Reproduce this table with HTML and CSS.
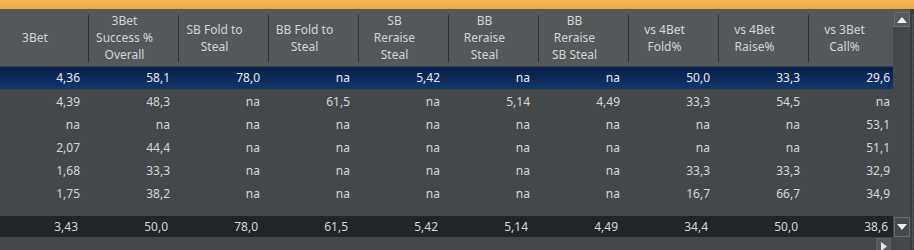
FILE: index.html
```html
<!DOCTYPE html>
<html>
<head>
<meta charset="utf-8">
<link rel="stylesheet" href="styles.css">
</head>
<body>
<div class="app">
  <div class="topbar"></div>
  <div class="main">
    <div class="grid-area">
      <div class="grid-clip">
        <table class="grid">
          <colgroup>
            <col class="c-first"><col class="c"><col class="c"><col class="c"><col class="c"><col class="c"><col class="c"><col class="c"><col class="c"><col class="c">
          </colgroup>
          <thead>
            <tr>
              <th><span>3Bet</span></th>
              <th><span>3Bet<br>Success %<br>Overall</span></th>
              <th><span>SB Fold to<br>Steal</span></th>
              <th><span>BB Fold to<br>Steal</span></th>
              <th><span>SB<br>Reraise<br>Steal</span></th>
              <th><span>BB<br>Reraise<br>Steal</span></th>
              <th><span>BB<br>Reraise<br>SB Steal</span></th>
              <th><span>vs 4Bet<br>Fold%</span></th>
              <th><span>vs 4Bet<br>Raise%</span></th>
              <th><span>vs 3Bet<br>Call%</span></th>
            </tr>
          </thead>
          <tbody>
            <tr class="selected"><td>4,36</td><td>58,1</td><td>78,0</td><td>na</td><td>5,42</td><td>na</td><td>na</td><td>50,0</td><td>33,3</td><td>29,6</td></tr>
            <tr><td>4,39</td><td>48,3</td><td>na</td><td>61,5</td><td>na</td><td>5,14</td><td>4,49</td><td>33,3</td><td>54,5</td><td>na</td></tr>
            <tr><td>na</td><td>na</td><td>na</td><td>na</td><td>na</td><td>na</td><td>na</td><td>na</td><td>na</td><td>53,1</td></tr>
            <tr><td>2,07</td><td>44,4</td><td>na</td><td>na</td><td>na</td><td>na</td><td>na</td><td>na</td><td>na</td><td>51,1</td></tr>
            <tr><td>1,68</td><td>33,3</td><td>na</td><td>na</td><td>na</td><td>na</td><td>na</td><td>33,3</td><td>33,3</td><td>32,9</td></tr>
            <tr><td>1,75</td><td>38,2</td><td>na</td><td>na</td><td>na</td><td>na</td><td>na</td><td>16,7</td><td>66,7</td><td>34,9</td></tr>
            <tr class="spacer"><td colspan="10"></td></tr>
            <tr class="total"><td>3,43</td><td>50,0</td><td>78,0</td><td>61,5</td><td>5,42</td><td>5,14</td><td>4,49</td><td>34,4</td><td>50,0</td><td>38,6</td></tr>
          </tbody>
        </table>
      </div>
      <div class="hscroll">
        <div class="sbtn sbtn-right">
          <svg width="6" height="9" viewBox="0 0 6 9"><path d="M0 0 L6 4.5 L0 9 Z" fill="#e6e6e6"/></svg>
        </div>
      </div>
    </div>
    <div class="vscroll">
      <div class="vs-top">
        <div class="sbtn sbtn-up">
          <svg width="10" height="6" viewBox="0 0 10 6"><path d="M0 6 L5 0 L10 6 Z" fill="#f0f0f0"/></svg>
        </div>
      </div>
      <div class="vs-track"></div>
      <div class="sbtn sbtn-down">
        <svg width="10" height="6" viewBox="0 0 10 6"><path d="M0 0 L10 0 L5 6 Z" fill="#f0f0f0"/></svg>
      </div>
      <div class="vs-bottom"></div>
    </div>
    <div class="edge"></div>
  </div>
</div>
</body>
</html>
```

FILE: styles.css
```css
html, body {
  margin: 0;
  padding: 0;
  background: #45484b;
}
.app {
  width: 914px;
  height: 250px;
  overflow: hidden;
  display: flex;
  flex-direction: column;
  font-family: "Noto Sans", "Open Sans", sans-serif;
  font-size: 12px;
}
.topbar {
  height: 9px;
  flex: none;
  background: linear-gradient(#f6b656, #f0aa45);
}
.main {
  flex: 1;
  display: flex;
  min-height: 0;
}
.grid-area {
  width: 893px;
  flex: none;
  display: flex;
  flex-direction: column;
  background: #45484b;
  overflow: hidden;
}
.grid-clip {
  width: 893px;
  flex: none;
  overflow: hidden;
}
.grid {
  border-collapse: collapse;
  table-layout: fixed;
  width: 899px;
}
.c-first { width: 89px; }
.c { width: 90px; }
.grid th {
  height: 57px;
  padding: 0 19px 0 0;
  background: #55585b;
  color: #d2d4d6;
  font-weight: normal;
  text-align: center;
  line-height: 16.7px;
  position: relative;
  border-bottom: 1px solid #3d4043;
  vertical-align: middle;
}
.grid th span {
  position: relative;
  top: 1px;
}
.grid th::after {
  content: "";
  position: absolute;
  right: 0;
  top: 6px;
  bottom: 4px;
  width: 1px;
  background: #2f3235;
}
.grid td {
  height: 23px;
  padding: 0 9px 0 0;
  text-align: right;
  color: #d6d7d8;
  line-height: 23px;
  white-space: nowrap;
}
.grid tr.selected td {
  background: linear-gradient(#081d49, #0b2a5a 50%, #12386d);
  color: #e6ecf5;
  height: 22px;
  line-height: 22px;
  border-bottom: 1px solid #3f4245;
}
.grid tr.spacer td {
  height: 11px;
  padding: 0;
}
.grid tr.total td {
  background: #222528;
  height: 21px;
  line-height: 21px;
  color: #d6d7d8;
  padding-right: 11px;
}
.hscroll {
  flex: 1;
  min-height: 0;
  display: flex;
  justify-content: flex-end;
  align-items: flex-start;
  padding: 1px 2px 0 0;
  overflow: hidden;
}
.sbtn {
  box-sizing: border-box;
  background: #56595c;
  border: 1px solid #6a6d70;
  display: flex;
  align-items: center;
  justify-content: center;
  flex: none;
}
.sbtn-right {
  width: 15px;
  height: 16px;
  border-color: #5e6164;
}
.vscroll {
  width: 17px;
  flex: none;
  display: flex;
  flex-direction: column;
  background: #45484b;
}
.vs-top {
  height: 18px;
  flex: none;
  background: #55585b;
  padding: 3px 0 0 1px;
  box-sizing: border-box;
}
.sbtn-up {
  width: 16px;
  height: 15px;
}
.vs-track {
  flex: 1;
}
.sbtn-down {
  width: 16px;
  height: 20px;
  margin-left: 1px;
  background: #46494c;
}
.vs-bottom {
  height: 13px;
  flex: none;
}
.edge {
  width: 4px;
  flex: none;
  background: #3a3d40;
  position: relative;
}
.edge::after {
  content: "";
  position: absolute;
  left: 2px;
  top: 6px;
  bottom: 0;
  width: 1px;
  background: repeating-linear-gradient(#6a6d70 0 1px, transparent 1px 2px);
}
```
